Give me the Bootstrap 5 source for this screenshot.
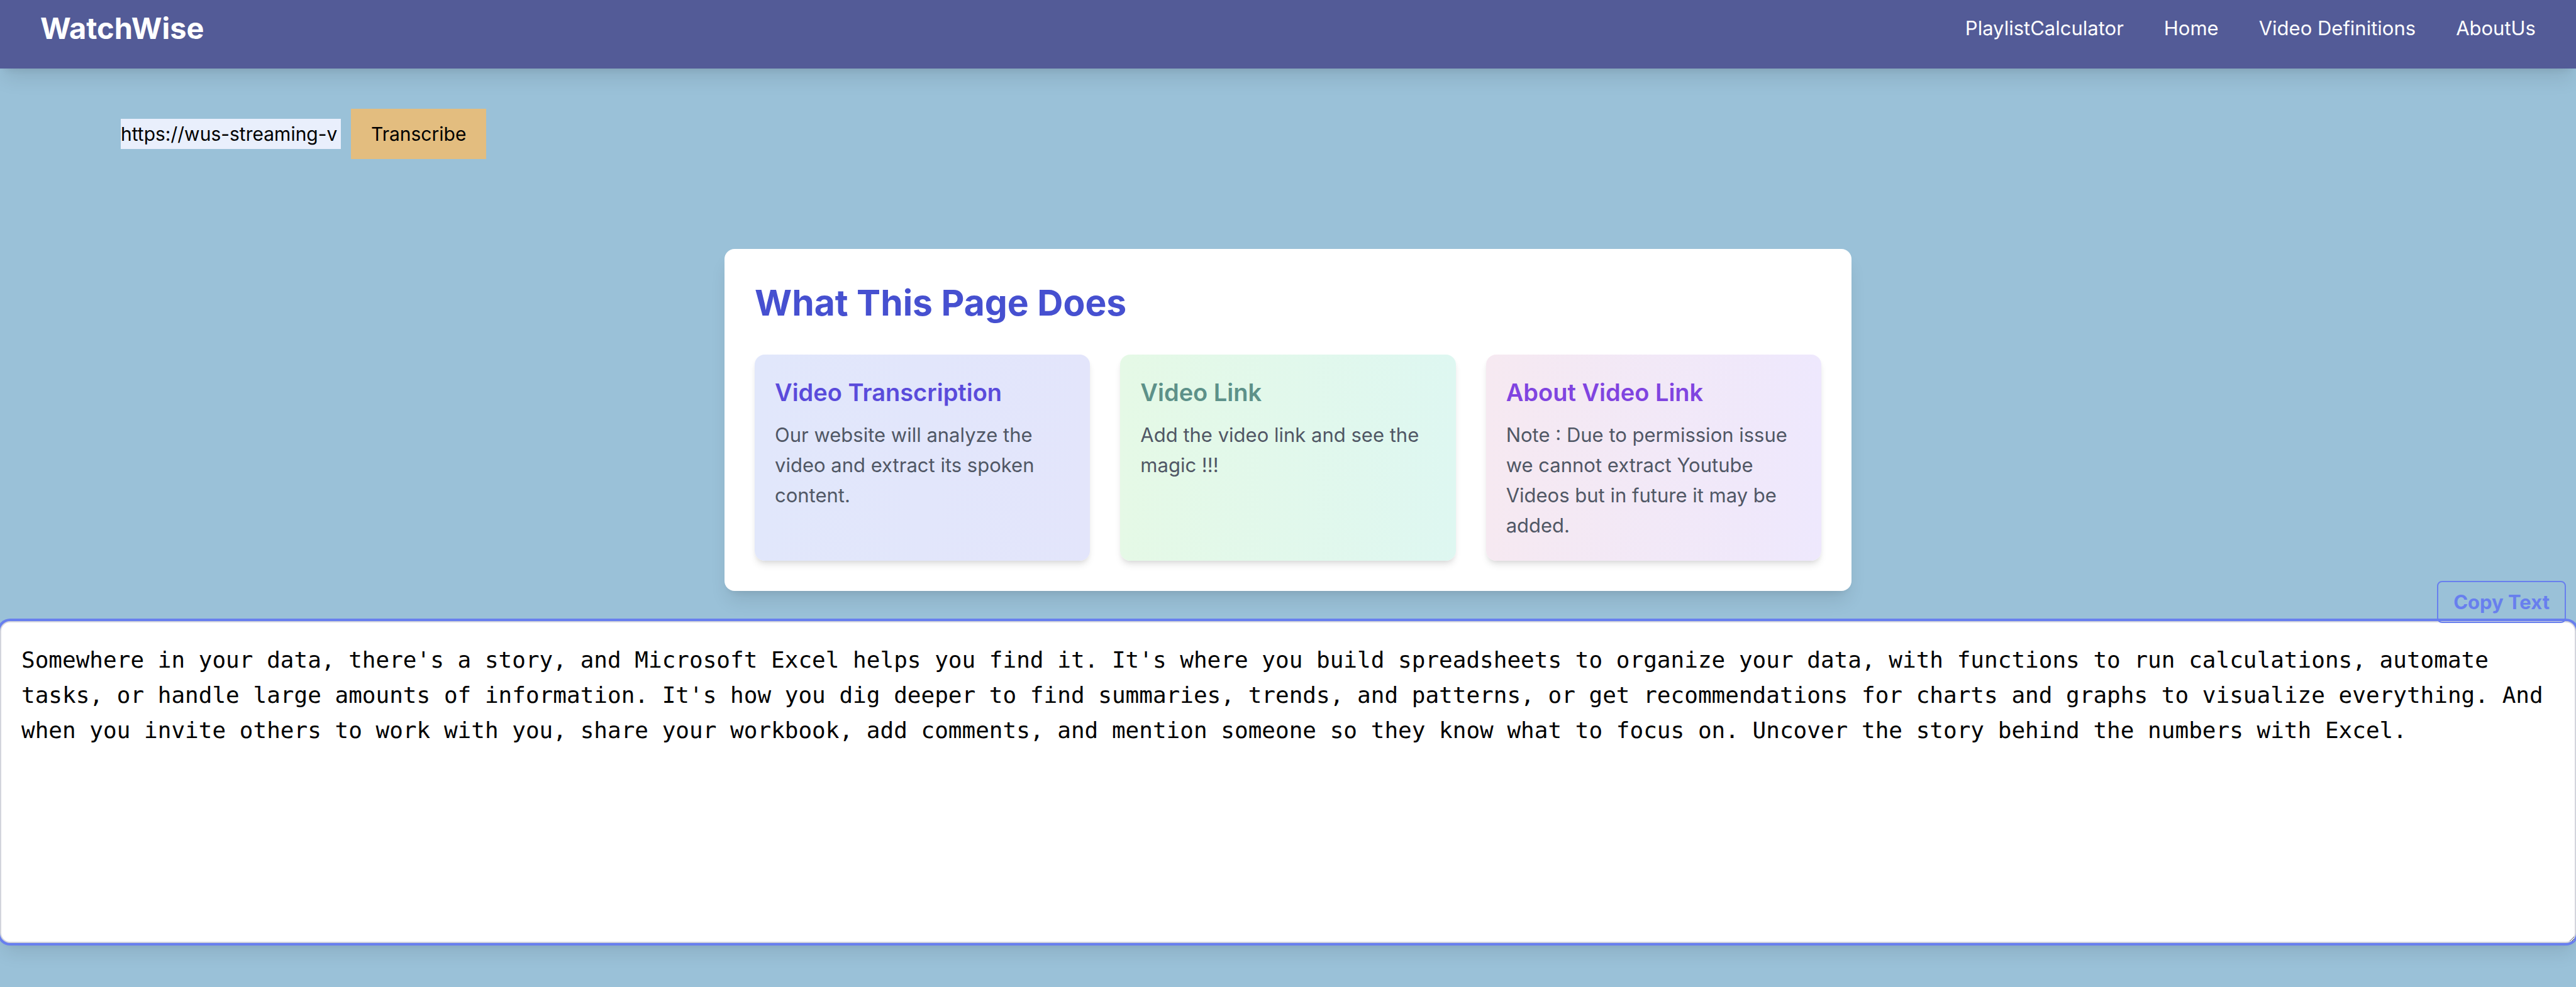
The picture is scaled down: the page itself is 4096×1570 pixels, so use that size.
<!DOCTYPE html>
<html lang="en">
<head>
<meta charset="utf-8">
<meta name="viewport" content="width=device-width, initial-scale=1">
<title>WatchWise</title>
<link rel="stylesheet" href="https://cdn.jsdelivr.net/npm/bootstrap@5.3.0/dist/css/bootstrap.min.css">
<style>
  :root {
    --ring: #687fee;
    --shadow-lg: 0 20px 30px -6px rgba(0, 0, 0, .1), 0 8px 12px -8px rgba(0, 0, 0, .1);
    --shadow-md: 0 8px 12px -2px rgba(0, 0, 0, .1), 0 4px 8px -4px rgba(0, 0, 0, .1);
  }
  body {
    background: #9ac1d8;
    color: #000;
    font-family: Inter, "Liberation Sans", sans-serif;
    font-size: 31px;
    line-height: 48px;
    min-height: 100vh;
  }
  .site-bar { background: #535b97; padding: 13px 64px 32px; box-shadow: var(--shadow-lg); }
  .site-bar a { color: #fff; text-decoration: none; }
  .brand { font-size: 47px; line-height: 64px; font-weight: 700; }
  .site-links { gap: 64px; }
  .link-form { padding: 64px 192px 0; gap: 16px; font-size: 30px; }
  .link-input { width: 350px; height: 48px; padding: 0; border: 0; border-radius: 0; background: #e9effc; color: #000; }
  .go-btn { height: 80px; padding: 0 32px; border: 0; border-radius: 0; background: #e3bd7f; color: #000; }
  .about-panel { max-width: 1792px; margin: 143px auto 48px; padding: 48px; border-radius: 16px; background: #fff; box-shadow: var(--shadow-lg); }
  .about-panel h2 { margin: 0 0 44px; font-size: 57px; line-height: 76px; font-weight: 700; color: #4650d0; }
  .about-grid { --bs-gutter-x: 48px; }
  .info-tile { padding: 32px; border-radius: 16px; color: #505765; box-shadow: var(--shadow-md); }
  .info-tile h3 { margin: 0 0 16px; font-size: 38px; line-height: 56px; font-weight: 600; }
  .info-tile p { margin: 0; }
  .tile-indigo { background: linear-gradient(to right, #e1e7fb, #e3e5fb); }
  .tile-indigo h3 { color: #5a4bdb; }
  .tile-green { background: linear-gradient(to right, #e5f9e6, #def7f1); }
  .tile-green h3 { color: #5d9189; }
  .tile-purple { background: linear-gradient(to right, #f6e9f1, #eee8fd); }
  .tile-purple h3 { color: #8044e0; }
  .output-text {
    display: block; height: 512px; padding: 32px; border: 2px solid #d3d5dc; border-radius: 16px;
    background: #fff; color: #000; resize: both; outline: 0;
    font-family: "DejaVu Sans Mono", monospace; font-size: 36px; line-height: 56px;
    box-shadow: 0 0 0 4px var(--ring), var(--shadow-lg);
  }
  .copy-btn {
    top: -64px; right: 16px; height: 67px; padding: 0 24px; border: 2px solid var(--ring); border-radius: 8px;
    background: transparent; color: var(--ring); font-weight: 700;
  }
</style>
</head>
<body>
<header>
  <nav class="site-bar d-flex align-items-center justify-content-between">
    <a class="brand" href="#">WatchWise</a>
    <ul class="site-links list-unstyled d-flex mb-0">
      <li><a href="#">PlaylistCalculator</a></li>
      <li><a href="#">Home</a></li>
      <li><a href="#">Video Definitions</a></li>
      <li><a href="#">AboutUs</a></li>
    </ul>
  </nav>
</header>
<main>
  <form class="link-form d-flex align-items-center">
    <input class="link-input" type="text" value="https://wus-streaming-v" aria-label="Video link">
    <button class="go-btn" type="button">Transcribe</button>
  </form>
  <section class="about-panel">
    <h2>What This Page Does</h2>
    <div class="row about-grid">
      <div class="col-4">
        <div class="info-tile tile-indigo h-100">
          <h3>Video Transcription</h3>
          <p>Our website will analyze the video and extract its spoken content.</p>
        </div>
      </div>
      <div class="col-4">
        <div class="info-tile tile-green h-100">
          <h3>Video Link</h3>
          <p>Add the video link and see the magic !!!</p>
        </div>
      </div>
      <div class="col-4">
        <div class="info-tile tile-purple h-100">
          <h3>About Video Link</h3>
          <p>Note : Due to permission issue we cannot extract Youtube Videos but in future it may be added.</p>
        </div>
      </div>
    </div>
  </section>
  <section class="position-relative">
    <textarea class="output-text w-100" aria-label="Transcript">Somewhere in your data, there's a story, and Microsoft Excel helps you find it. It's where you build spreadsheets to organize your data, with functions to run calculations, automate tasks, or handle large amounts of information. It's how you dig deeper to find summaries, trends, and patterns, or get recommendations for charts and graphs to visualize everything. And when you invite others to work with you, share your workbook, add comments, and mention someone so they know what to focus on. Uncover the story behind the numbers with Excel.</textarea>
    <button class="copy-btn position-absolute" type="button">Copy Text</button>
  </section>
</main>
<script src="https://cdn.jsdelivr.net/npm/bootstrap@5.3.0/dist/js/bootstrap.bundle.min.js"></script>
</body>
</html>
